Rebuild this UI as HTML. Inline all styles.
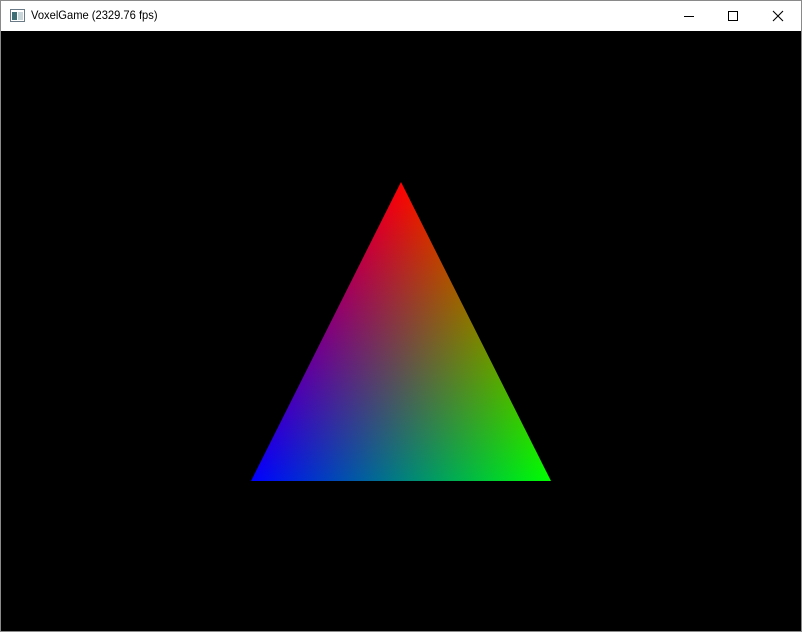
<!DOCTYPE html>
<html><head><meta charset="utf-8"><style>
html,body{margin:0;padding:0;width:802px;height:632px;overflow:hidden;background:#000}
.win{position:absolute;left:0;top:0;width:800px;height:630px;border:1px solid #8a8a8a;background:#000}
.title{position:absolute;left:0;top:0;width:800px;height:30px;background:#fff}
.title span{position:absolute;left:30px;top:7px;font:12px "Liberation Sans",sans-serif;color:#000;transform:scaleX(0.93);transform-origin:left top;white-space:nowrap}
</style></head><body>
<div class="win">
<div class="title">
<svg width="800" height="30" style="position:absolute;left:0;top:0">
<rect x="9.5" y="8.5" width="14" height="12" fill="#fff" stroke="#6a7a86"/>
<rect x="11" y="11" width="5" height="8" fill="#3f6f74"/>
<rect x="17" y="11" width="5" height="8" fill="#c8d6da"/>
<line x1="683" y1="15.5" x2="693" y2="15.5" stroke="#000"/>
<rect x="727.5" y="10.5" width="9" height="9" fill="none" stroke="#000"/>
<path d="M772 10 L782 20 M782 10 L772 20" stroke="#000" stroke-width="1.1"/>
</svg>
<span>VoxelGame (2329.76 fps)</span>
</div>
</div>
<svg width="802" height="632" style="position:absolute;left:0;top:0">
<defs>
<linearGradient id="r" gradientUnits="userSpaceOnUse" x1="401" y1="182" x2="401" y2="481"><stop offset="0" stop-color="#f00"/><stop offset="1" stop-color="#000"/></linearGradient>
<linearGradient id="b" gradientUnits="userSpaceOnUse" x1="251" y1="481" x2="490.7" y2="360.8"><stop offset="0" stop-color="#00f"/><stop offset="1" stop-color="#000"/></linearGradient>
<linearGradient id="g" gradientUnits="userSpaceOnUse" x1="551" y1="481" x2="311.3" y2="360.8"><stop offset="0" stop-color="#0f0"/><stop offset="1" stop-color="#000"/></linearGradient>
</defs>
<g style="isolation:isolate">
<polygon points="401,182 251,481 551,481" fill="url(#r)"/>
<polygon points="401,182 251,481 551,481" fill="url(#b)" style="mix-blend-mode:screen"/>
<polygon points="401,182 251,481 551,481" fill="url(#g)" style="mix-blend-mode:screen"/>
</g>
</svg>
</body></html>
